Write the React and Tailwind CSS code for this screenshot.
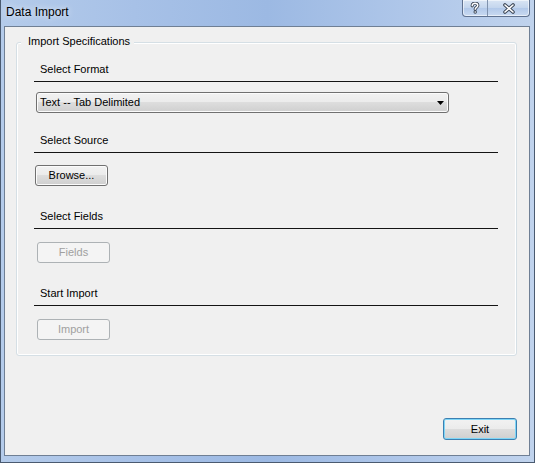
import React from 'react';

const font = { fontFamily: '"Liberation Sans", Arial, sans-serif' };

function SectionLabel({ children }) {
    return (
        <div className="h-[19px] border-b border-[#141414] pl-[6px] text-[11px] leading-[13px] text-black">
            {children}
        </div>
    );
}

function Button({ children, disabled, className = '' }) {
    const base = 'flex items-center justify-center rounded-[3px] border text-[11px] leading-[13px]';
    const look = disabled
        ? 'border-[#adb2b5] bg-[#f4f4f4] text-[#a0a0a0]'
        : 'border-[#707070] bg-[linear-gradient(to_bottom,#f2f2f2_0%,#ebebeb_50%,#dddddd_50%,#cfcfcf_100%)] text-black shadow-[inset_0_0_0_1px_#fbfbfb]';
    return <div className={`${base} ${look} ${className}`}>{children}</div>;
}

function CaptionButtons() {
    return (
        <div className="mr-[4px] ml-auto flex h-[17px] overflow-hidden rounded-b-[4px] border border-t-0 border-[#5f7290] bg-[linear-gradient(to_bottom,#d9e5f4_0%,#c3d5ed_50%,#b1c8e9_50%,#c9daf1_100%)] shadow-[inset_0_0_0_1px_rgba(255,255,255,0.55)]">
            <div className="flex w-[25px] items-center justify-center border-r border-[#7f92ad]">
                <svg width="10" height="12" viewBox="0 0 10 12">
                    <path d="M2.2 3.8 C2.2 1.8 3.6 1.2 5 1.2 C6.6 1.2 7.8 2 7.8 3.5 C7.8 5.3 5.2 5.4 5.2 7.3" fill="none" stroke="#3b4656" strokeWidth="3.2" strokeLinecap="round" />
                    <circle cx="5.2" cy="10" r="1.7" fill="#3b4656" />
                    <path d="M2.2 3.8 C2.2 1.8 3.6 1.2 5 1.2 C6.6 1.2 7.8 2 7.8 3.5 C7.8 5.3 5.2 5.4 5.2 7.3" fill="none" stroke="#ffffff" strokeWidth="1.4" strokeLinecap="round" />
                    <circle cx="5.2" cy="10" r="0.8" fill="#ffffff" />
                </svg>
            </div>
            <div className="flex w-[41px] items-center justify-center">
                <svg width="14" height="11" viewBox="0 0 14 11">
                    <path d="M3 2 L11 9 M11 2 L3 9" stroke="#3b4656" strokeWidth="3.6" strokeLinecap="round" />
                    <path d="M3 2 L11 9 M11 2 L3 9" stroke="#ffffff" strokeWidth="1.6" strokeLinecap="round" />
                </svg>
            </div>
        </div>
    );
}

export default function App() {
    return (
        <div
            style={font}
            className="flex h-[463px] w-[535px] flex-col border-x border-b border-[#4a5a70] bg-[linear-gradient(to_right,#b4cbea_0%,#a7c1e7_25%,#9cb9e3_50%,#aec6e9_75%,#c0d3ed_100%)]"
        >
            {/* Title bar */}
            <div className="flex h-[26px] items-start">
                <div className="pt-[5px] pl-[5px] text-[12px] leading-[14px] text-black [text-shadow:0_0_6px_rgba(255,255,255,0.9)]">
                    Data Import
                </div>
                <CaptionButtons />
            </div>

            {/* Client area */}
            <div className="mr-[4px] mb-[6px] ml-[3px] flex flex-1 flex-col border border-[#6f7f94] bg-[#f0f0f0]">
                {/* Group box */}
                <div className="relative mt-[15px] ml-[11px] w-[501px] rounded-[3px] border border-[#d5dfe5] pt-[20px] pr-[18px] pb-[15px] pl-[17px] shadow-[inset_0_0_0_1px_#ffffff]">
                    <div className="absolute top-[-8px] left-[4px] bg-[#f0f0f0] pr-[4px] pl-[7px] text-[11px] leading-[13px] text-black">
                        Import Specifications
                    </div>

                    <SectionLabel>Select Format</SectionLabel>
                    <div className="mt-[10px] ml-[2px] flex h-[21px] w-[413px] items-center rounded-[3px] border border-[#707070] bg-[linear-gradient(to_bottom,#f2f2f2_0%,#ebebeb_50%,#dddddd_50%,#cfcfcf_100%)] pl-[3px] text-[11px] leading-[13px] text-black shadow-[inset_0_0_0_1px_#fbfbfb]">
                        <span className="flex-1">Text -- Tab Delimited</span>
                        <svg className="mr-[4px]" width="7" height="4" viewBox="0 0 7 4">
                            <path d="M0 0 H7 L3.5 4 Z" fill="#000" />
                        </svg>
                    </div>

                    <div className="mt-[21px]">
                        <SectionLabel>Select Source</SectionLabel>
                    </div>
                    <Button className="mt-[12px] ml-[1px] h-[21px] w-[73px]">Browse...</Button>

                    <div className="mt-[24px]">
                        <SectionLabel>Select Fields</SectionLabel>
                    </div>
                    <Button disabled className="mt-[13px] ml-[3px] h-[21px] w-[73px]">Fields</Button>

                    <div className="mt-[24px]">
                        <SectionLabel>Start Import</SectionLabel>
                    </div>
                    <Button disabled className="mt-[13px] ml-[3px] h-[21px] w-[73px]">Import</Button>
                </div>

                <Button className="mt-auto mr-[12px] mb-[15px] h-[22px] w-[74px] self-end !border-[#3c7fb1] !shadow-[inset_0_0_0_1px_#7fd6f7]">
                    Exit
                </Button>
            </div>
        </div>
    );
}
